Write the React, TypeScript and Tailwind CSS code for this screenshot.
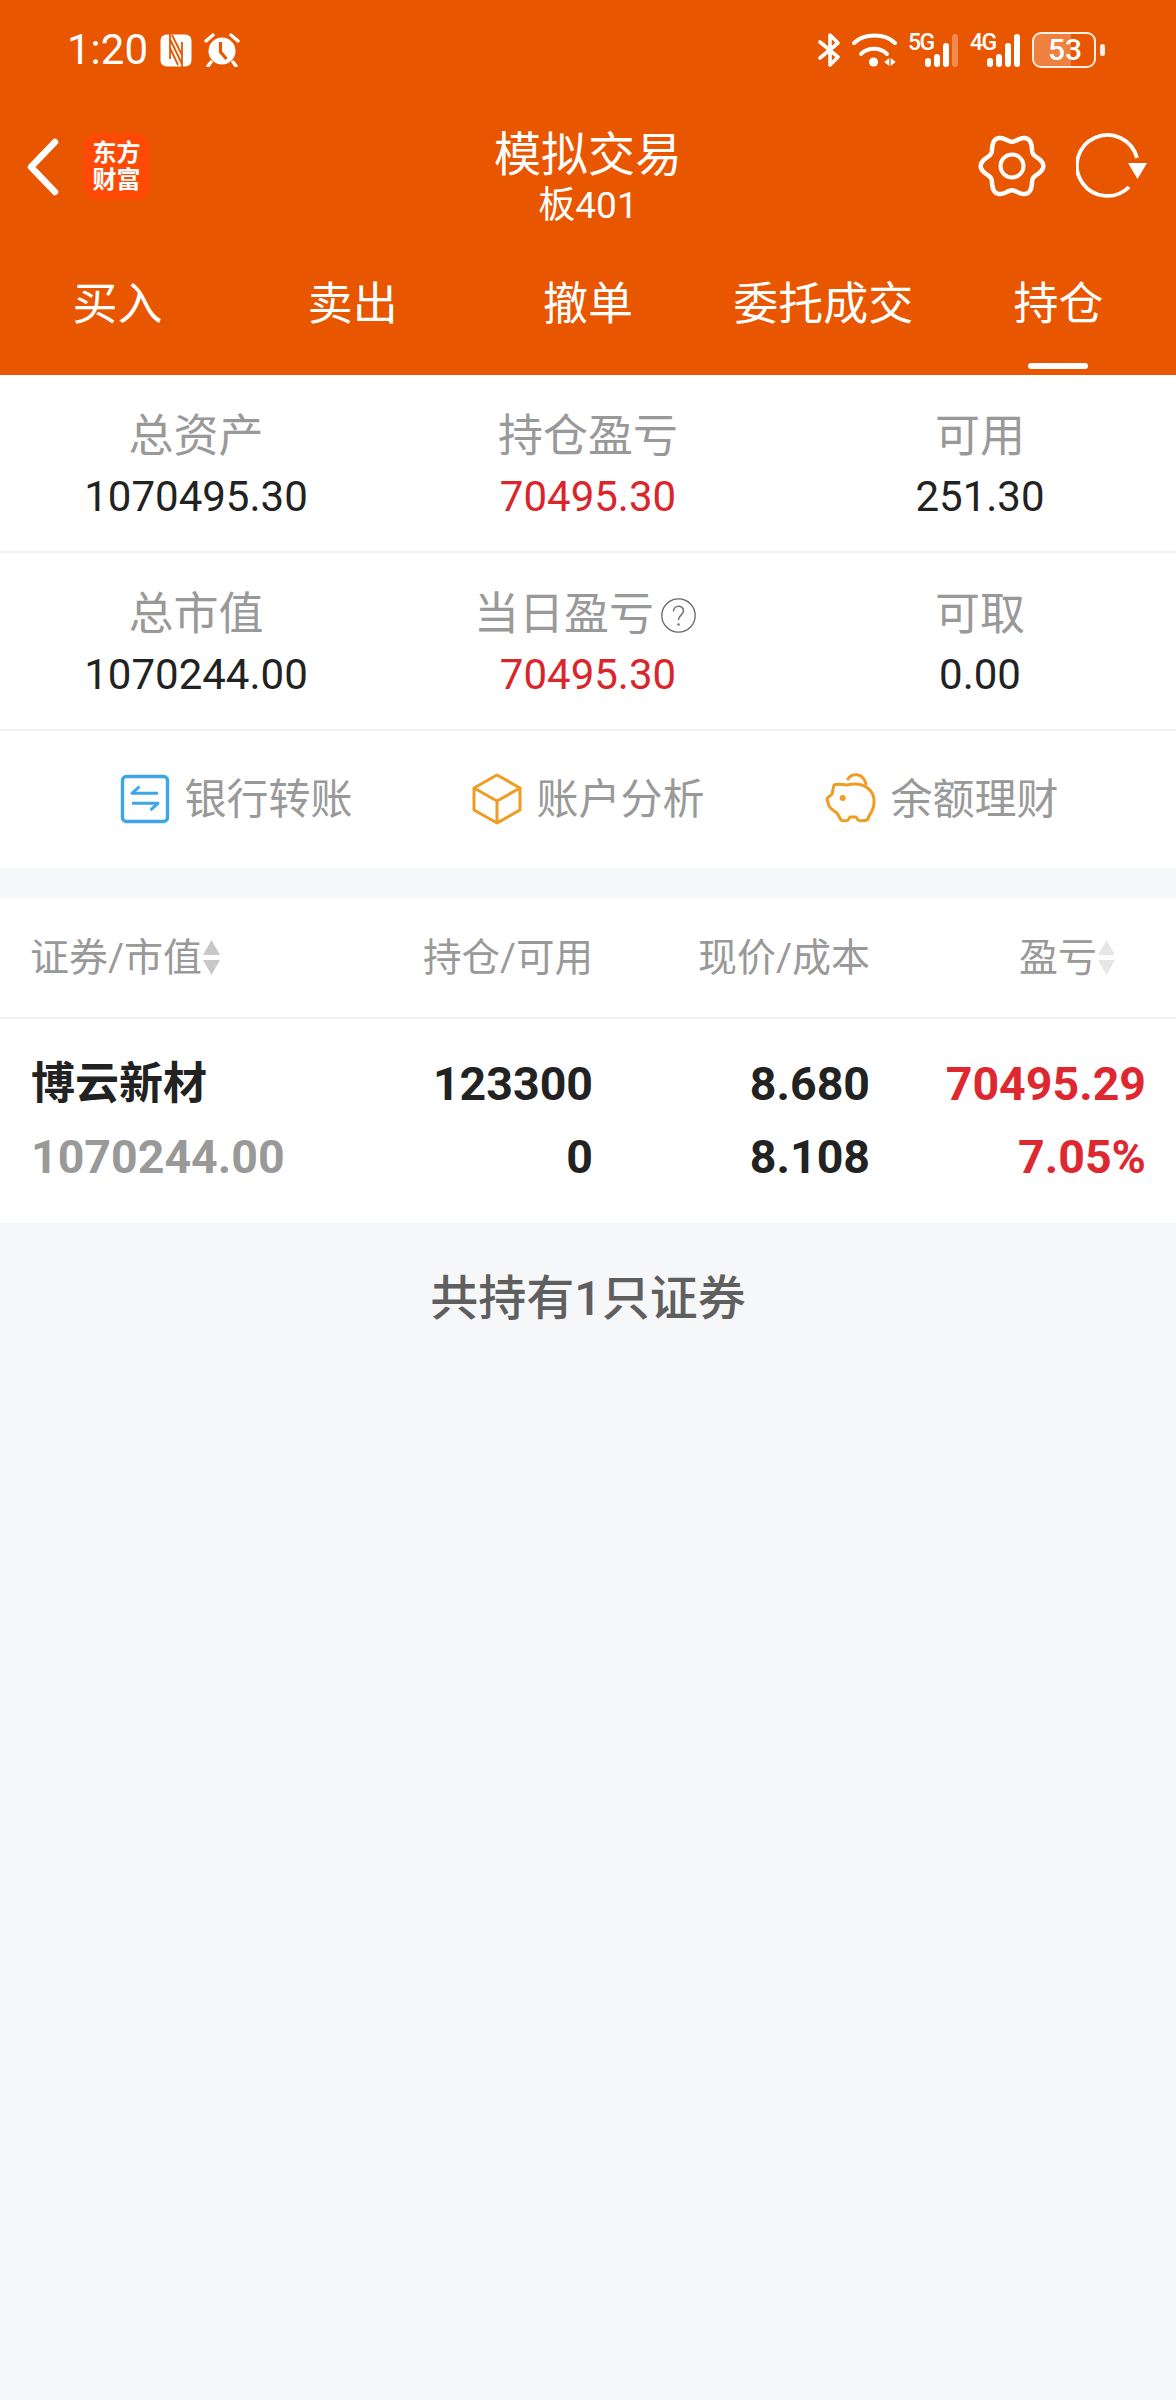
import React from "react";

const FONT = "font-['Roboto','Noto_Sans_CJK_SC',sans-serif]";

function gearPath(cx: number, cy: number) {
  const pts: string[] = [];
  for (let i = 0; i <= 240; i++) {
    const t = (i / 240) * Math.PI * 2;
    const rr = 27.8 + 3.5 * Math.cos(6 * t);
    pts.push(`${(cx + rr * Math.cos(t)).toFixed(2)},${(cy + rr * Math.sin(t)).toFixed(2)}`);
  }
  return "M" + pts.join("L") + "Z";
}

const Nfc = () => (
  <svg width="32" height="33" viewBox="0 0 32 33" className="ml-[12px]">
    <rect x="0.500" y="0.500" width="31" height="32" rx="6" fill="white" />
    <path d="M10 0V25M22 8V33M10 5L22 30M12 1L22 21M10 14L18 31" stroke="#E85600" strokeWidth="1.800" fill="none" />
  </svg>
);

const Alarm = () => (
  <svg width="36" height="34" viewBox="0 0 36 34" className="ml-[12px]">
    <circle cx="18" cy="18" r="13.500" fill="white" />
    <path d="M16.500 9v10l6 7" stroke="#E85600" strokeWidth="3.200" fill="none" />
    <path d="M2 8l7-6M34 8l-7-6M7 29l-3 4M29 29l3 4" stroke="white" strokeWidth="3.400" strokeLinecap="round" />
  </svg>
);

const Bt = () => (
  <svg width="22" height="34" viewBox="0 0 22 34">
    <path d="M2 9l18 15-8 8V2l8 8L2 25" stroke="white" strokeWidth="3.600" fill="none" strokeLinejoin="round" strokeLinecap="round" />
  </svg>
);

const Wifi = () => (
  <svg width="45" height="36" viewBox="0 0 45 36" className="ml-[12px]">
    <path d="M2 11C12 1 33 1 43 11" stroke="white" strokeWidth="4" fill="none" strokeLinecap="round" />
    <path d="M9 22c7-7 19-7 26 0" stroke="white" strokeWidth="4" fill="none" strokeLinecap="round" />
    <circle cx="21.500" cy="30" r="4.600" fill="white" />
    <path d="M37.300 26v8l-5-4zM38.700 26v8l5-4z" fill="white" />
  </svg>
);

const Signal = ({ label, dim, cls }: { label: string; dim?: boolean; cls: string }) => (
  <div className={`relative w-[50px] h-[34px] flex items-end justify-end ${cls}`}>
    <span className="absolute left-0 top-[-1px] text-[23px] leading-[22px] font-medium text-white tracking-[-1.500px] font-['Roboto',sans-serif]">{label}</span>
    <div className="flex items-end gap-[3px]">
      <div className="w-[6px] h-[9px] rounded-full bg-white" />
      <div className="w-[6px] h-[13px] rounded-full bg-white" />
      <div className="w-[6px] h-[24px] rounded-full bg-white" />
      <div className={`w-[6px] h-[33px] rounded-full ${dim ? "bg-[#F28A50]" : "bg-white"}`} />
    </div>
  </div>
);

const Battery = () => (
  <div className="flex items-center ml-[12px]">
    <div className="relative w-[64px] h-[36px] rounded-[9px] border-[2px] border-white/90 overflow-hidden flex items-center justify-center">
      <div className="absolute left-0 top-0 bottom-0 w-[37px] bg-white/25" />
      <span className="relative ml-[2px] text-[30px] leading-none font-medium text-white font-['Roboto',sans-serif]">53</span>
    </div>
    <div className="ml-[4px] w-[5px] h-[12px] rounded-full bg-white/90" />
  </div>
);

const Stat = ({ label, value, red, help }: { label: string; value: string; red?: boolean; help?: boolean }) => (
  <div className="flex flex-col items-center">
    <div className={`flex items-center h-[44px] ${help ? "pr-[6px]" : ""}`}>
      <span className="text-[45px] leading-[44px] text-[#999999]">{label}</span>
      {help && (
        <svg width="35" height="35" viewBox="0 0 35 35" className="ml-[7px]">
          <circle cx="17.500" cy="17.500" r="16.700" stroke="#666" strokeWidth="1.300" fill="none" />
          <path d="M12.500 13.500c0-7 10-7 10-.5 0 4-5 4-5 9" stroke="#777" strokeWidth="1.600" fill="none" />
          <circle cx="17.500" cy="26.500" r="1.300" fill="#777" />
        </svg>
      )}
    </div>
    <span className={`mt-[16px] text-[42px] leading-[44px] ${red ? "text-[#D9252B]" : "text-[#222222]"}`}>{value}</span>
  </div>
);

const StatRow = ({ children }: { children: React.ReactNode }) => (
  <div className="grid grid-cols-3 h-[178px] pt-[40px] border-b-2 border-[#F0F0F0]">{children}</div>
);

const Sort = ({ light }: { light?: boolean }) => (
  <svg width="19" height="35" viewBox="0 0 19 35" className="shrink-0">
    <path d="M9.500 0L18 15H1z" fill={light ? "#E6E6E6" : "#C8C8C8"} />
    <path d="M9.500 35L1 20h17z" fill={light ? "#E6E6E6" : "#C8C8C8"} />
  </svg>
);

const Link = ({ icon, label }: { icon: React.ReactNode; label: string }) => (
  <div className="flex items-center gap-[14px]">
    {icon}
    <span className="mt-[3px] text-[42px] leading-[50px] text-[#999999]">{label}</span>
  </div>
);

export default function App() {
  return (
    <div className={`w-[1176px] h-[2400px] bg-[#F6F7F9] overflow-hidden ${FONT}`}>
      <div className="bg-[#E85600] h-[375px] flex flex-col">
        <div className="h-[100px] flex items-center justify-between pl-[67px] pr-[71px]">
          <div className="flex items-center">
            <span className="text-[42px] leading-none text-white font-['Roboto',sans-serif]">1:20</span>
            <Nfc />
            <Alarm />
          </div>
          <div className="flex items-center">
            <Bt />
            <Wifi />
            <Signal label="5G" dim cls="ml-[11px]" />
            <Signal label="4G" cls="ml-[12px]" />
            <Battery />
          </div>
        </div>
        <div className="h-[133px] flex items-start">
          <div className="w-[300px] flex items-center pl-[25px] pt-[33px]">
            <svg width="34" height="58" viewBox="0 0 34 58">
              <path d="M30 4L6 29l24 25" stroke="white" strokeWidth="6.500" fill="none" strokeLinecap="round" strokeLinejoin="round" />
            </svg>
            <div className="ml-[24px] w-[67px] h-[67px] rounded-[14px] bg-[#FF4A05] flex flex-col items-center justify-center text-white font-bold text-[24px] leading-[27px]">
              <span>东方</span>
              <span>财富</span>
            </div>
          </div>
          <div className="flex-1 flex flex-col items-center pt-[26px] text-white">
            <span className="text-[47px] leading-[58px]">模拟交易</span>
            <span className="text-[37px] leading-[44px]">板401</span>
          </div>
          <div className="w-[300px] flex items-center justify-end pr-[26px] pt-[31px] gap-[29px]">
            <svg width="70" height="70" viewBox="0 0 70 70">
              <path d={gearPath(35, 35)} stroke="white" strokeWidth="4.500" fill="none" strokeLinejoin="round" />
              <circle cx="35" cy="35" r="11.500" stroke="white" strokeWidth="4" fill="none" />
            </svg>
            <svg width="74" height="70" viewBox="0 0 74 70">
              <path d="M53 56A30.500 30.500 0 1 1 61 27" stroke="white" strokeWidth="3.800" fill="none" />
              <path d="M52 32h19l-9.500 16z" fill="white" />
            </svg>
          </div>
        </div>
        <div className="flex-1 grid grid-cols-5 text-white">
          {["买入", "卖出", "撤单", "委托成交", "持仓"].map((t, i) => (
            <div key={t} className="flex flex-col items-center pt-[44px]">
              <span className="text-[45px] leading-[56px]">{t}</span>
              {i === 4 && <div className="mt-[30px] w-[60px] h-[6px] rounded-full bg-white" />}
            </div>
          ))}
        </div>
      </div>

      <div className="bg-white">
        <StatRow>
          <Stat label="总资产" value="1070495.30" />
          <Stat label="持仓盈亏" value="70495.30" red />
          <Stat label="可用" value="251.30" />
        </StatRow>
        <StatRow>
          <Stat label="总市值" value="1070244.00" />
          <Stat label="当日盈亏" value="70495.30" red help />
          <Stat label="可取" value="0.00" />
        </StatRow>
        <div className="h-[137px] flex items-center justify-center gap-[120px] pb-[2px] pl-[3px]">
          <Link
            label="银行转账"
            icon={
              <svg width="50" height="50" viewBox="0 0 50 50">
                <rect x="2.500" y="2.500" width="45" height="45" rx="4" stroke="#3DA5E8" strokeWidth="3.400" fill="none" />
                <path d="M19.500 12.500l-7.500 6.800h26M12 29.300h26l-7.500 6.800" stroke="#3DA5E8" strokeWidth="3" fill="none" strokeLinejoin="round" />
              </svg>
            }
          />
          <Link
            label="账户分析"
            icon={
              <svg width="50" height="52" viewBox="0 0 50 52">
                <path d="M25 2l23 13v22L25 50 2 37V15zM2 15l23 13 23-13M25 28v22" stroke="#EE9C22" strokeWidth="3" fill="none" strokeLinejoin="round" />
              </svg>
            }
          />
          <Link
            label="余额理财"
            icon={
              <svg width="52" height="52" viewBox="0 0 52 52">
                <path d="M9 12C12 10 18 12 22 12C40 8 50 18 49 30C49 36 46 40 44 43L43 46C42 48 34 48 33 47L31 44C29 44 26 44 25 44L23 47C22 48 17 48 16 47L12 40C9 38 6 36 4 33L2 26C2 24 6 23 7 21Z" stroke="#EE9C22" strokeWidth="3" fill="none" strokeLinejoin="round" />
                <path d="M23 6C26 0 38 -1 41 11" stroke="#EE9C22" strokeWidth="3" fill="none" strokeLinecap="round" />
                <circle cx="17.700" cy="25" r="3" fill="#EE9C22" />
              </svg>
            }
          />
        </div>
      </div>

      <div className="mt-[30px] bg-white">
        <div className="h-[121px] border-b-2 border-[#F0F0F0] grid grid-cols-[289px_274px_277px_276px] px-[30px] items-center text-[39px] leading-[48px] text-[#999999]">
          <div className="flex items-center"><span>证券/市值</span><Sort /></div>
          <div className="text-right text-[38.500px]">持仓/可用</div>
          <div className="text-right">现价/成本</div>
          <div className="flex items-center justify-end pr-[30px]"><span>盈亏</span><Sort light /></div>
        </div>
        <div className="h-[204px] grid grid-cols-[289px_274px_277px_276px] grid-rows-[73px_73px] content-center px-[30px] text-[46.500px] leading-[73px] font-bold text-[#222222]">
          <div className="pl-[1px] text-[44px]">博云新材</div>
          <div className="text-right">123300</div>
          <div className="text-right">8.680</div>
          <div className="text-right text-[#DD2830]">70495.29</div>
          <div className="pl-[1px] text-[#999999]">1070244.00</div>
          <div className="text-right">0</div>
          <div className="text-right">8.108</div>
          <div className="text-right text-[#DD2830]">7.05%</div>
        </div>
      </div>

      <div className="pt-[46px] text-center text-[48px] leading-[60px] font-medium text-[#5F5F5F]">共持有1只证券</div>
    </div>
  );
}
